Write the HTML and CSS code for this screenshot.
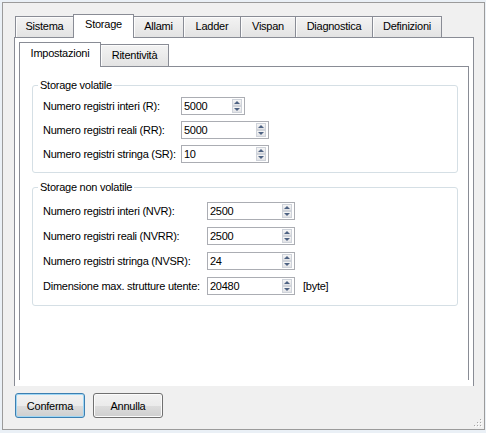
FILE: index.html
```html
<!DOCTYPE html>
<html lang="it">
<head>
<meta charset="utf-8">
<title>Storage</title>
<link rel="stylesheet" href="styles.css">
</head>
<body>
<div class="window">
  <div class="tabctl">
    <div class="tabs outer-tabs">
      <div class="tab w-sistema">Sistema</div>
      <div class="tab w-storage selected">Storage</div>
      <div class="tab w-allami">Allami</div>
      <div class="tab w-ladder">Ladder</div>
      <div class="tab w-vispan">Vispan</div>
      <div class="tab w-diag">Diagnostica</div>
      <div class="tab w-def last">Definizioni</div>
    </div>
    <div class="panel outer-panel">
      <div class="tabs inner-tabs">
        <div class="tab w-imp selected">Impostazioni</div>
        <div class="tab w-rit last">Ritentività</div>
      </div>
      <div class="panel inner-panel">
        <fieldset class="group g-vol">
          <legend>Storage volatile</legend>
          <div class="rows">
            <div class="row">
              <span class="lbl">Numero registri interi (R):</span>
              <div class="spin narrow"><span class="val">5000</span><span class="btns"><span class="sb up"></span><span class="sb dn"></span></span></div>
            </div>
            <div class="row">
              <span class="lbl">Numero registri reali (RR):</span>
              <div class="spin"><span class="val">5000</span><span class="btns"><span class="sb up"></span><span class="sb dn"></span></span></div>
            </div>
            <div class="row">
              <span class="lbl">Numero registri stringa (SR):</span>
              <div class="spin"><span class="val">10</span><span class="btns"><span class="sb up"></span><span class="sb dn"></span></span></div>
            </div>
          </div>
        </fieldset>
        <fieldset class="group g-nvol">
          <legend>Storage non volatile</legend>
          <div class="rows">
            <div class="row">
              <span class="lbl">Numero registri interi (NVR):</span>
              <div class="spin"><span class="val">2500</span><span class="btns"><span class="sb up"></span><span class="sb dn"></span></span></div>
            </div>
            <div class="row">
              <span class="lbl">Numero registri reali (NVRR):</span>
              <div class="spin"><span class="val">2500</span><span class="btns"><span class="sb up"></span><span class="sb dn"></span></span></div>
            </div>
            <div class="row">
              <span class="lbl">Numero registri stringa (NVSR):</span>
              <div class="spin"><span class="val">24</span><span class="btns"><span class="sb up"></span><span class="sb dn"></span></span></div>
            </div>
            <div class="row">
              <span class="lbl">Dimensione max. strutture utente:</span>
              <div class="spin"><span class="val">20480</span><span class="btns"><span class="sb up"></span><span class="sb dn"></span></span></div>
              <span class="unit">[byte]</span>
            </div>
          </div>
        </fieldset>
      </div>
    </div>
  </div>
  <div class="footer">
    <button class="btn default">Conferma</button>
    <button class="btn">Annulla</button>
    <svg class="grip" width="9" height="9" viewBox="0 0 9 9">
      <g fill="#fff">
        <rect x="7" y="1" width="1" height="1"/>
        <rect x="4" y="4" width="1" height="1"/><rect x="7" y="4" width="1" height="1"/>
        <rect x="1" y="7" width="1" height="1"/><rect x="4" y="7" width="1" height="1"/><rect x="7" y="7" width="1" height="1"/>
      </g>
      <g fill="#a6a6a6">
        <rect x="6" y="0" width="1" height="1"/>
        <rect x="3" y="3" width="1" height="1"/><rect x="6" y="3" width="1" height="1"/>
        <rect x="0" y="6" width="1" height="1"/><rect x="3" y="6" width="1" height="1"/><rect x="6" y="6" width="1" height="1"/>
      </g>
    </svg>
  </div>
</div>
</body>
</html>
```
FILE: styles.css
```css
html, body {
  margin: 0;
  padding: 0;
}
body {
  background: #eaf0f6;
  font-family: "Liberation Sans", Arial, sans-serif;
  font-size: 11px;
  color: #000;
  letter-spacing: -0.25px;
}

.window {
  box-sizing: border-box;
  margin: 2px 0 0 2px;
  width: 483px;
  height: 428px;
  border: 1px solid #9b9b9b;
  background: #f0f0f0;
  padding: 11px 0 0 11px;
  display: flex;
  flex-direction: column;
}

.tabctl {
  width: 460px;
}

.tabs {
  display: flex;
  align-items: flex-end;
}
.outer-tabs {
  height: 23px;
  padding-left: 1px;
}
.inner-tabs {
  height: 24px;
}

.tab {
  box-sizing: border-box;
  height: 21px;
  border-left: 1px solid #898c95;
  border-top: 1px solid #898c95;
  background: linear-gradient(#f3f3f3, #e3e3e3);
  box-shadow: inset 1px 1px 0 #fcfcfc;
  text-align: center;
  line-height: 18px;
  white-space: nowrap;
}
.inner-tabs .tab {
  height: 22px;
  line-height: 20px;
}
.tab.last {
  border-right: 1px solid #898c95;
}
.tab.selected {
  position: relative;
  z-index: 1;
  height: 24px;
  margin-bottom: -1px;
  margin-right: -1px;
  border-right: 1px solid #898c95;
  background: #fff;
  box-shadow: none;
  line-height: 19px;
}
.inner-tabs .tab.selected {
  height: 25px;
  line-height: 21px;
}

.w-sistema { width: 58px; }
.w-storage { width: 61px; }
.w-allami { width: 50px; }
.w-ladder { width: 57px; }
.w-vispan { width: 55px; }
.w-diag { width: 77px; }
.w-def { width: 70px; }
.w-imp { width: 82px; }
.w-rit { width: 69px; }

.panel {
  box-sizing: border-box;
  border: 1px solid #898c95;
  border-bottom: none;
  background: #fff;
}
.outer-panel {
  height: 349px;
  padding: 4px 4px 0 4px;
}
.inner-panel {
  width: 450px;
  height: 314px;
  padding: 12px 10px 0 12px;
}

.group {
  margin: 0;
  padding: 0;
  min-width: 0;
  width: 426px;
  box-sizing: border-box;
  border: 1px solid #d5dfe5;
  border-radius: 3px;
}
.group legend {
  margin-left: 5px;
  padding: 0 2px;
  line-height: 13px;
  height: 13px;
}
.rows {
  display: flex;
  flex-direction: column;
  padding-left: 10px;
}
.g-vol .rows {
  gap: 6px;
  padding-top: 5px;
  padding-bottom: 9px;
}
.g-nvol {
  margin-top: 8px;
}
.g-nvol .rows {
  gap: 7px;
  padding-top: 8px;
  padding-bottom: 10px;
}

.row {
  display: flex;
  align-items: center;
  height: 18px;
}
.lbl {
  white-space: nowrap;
}
.g-vol .lbl { width: 138px; }
.g-nvol .lbl { width: 164px; }

.spin {
  box-sizing: border-box;
  width: 88px;
  height: 18px;
  border: 1px solid #abadb3;
  background: #fff;
  display: flex;
  align-items: center;
  padding-left: 2px;
}
.spin.narrow { width: 64px; }
.val { flex: 1; }
.btns {
  display: flex;
  flex-direction: column;
  width: 10px;
  height: 14px;
  margin-right: 2px;
}
.sb {
  box-sizing: border-box;
  height: 7px;
  border: 1px solid #cfd3da;
  background: linear-gradient(#f6f6f6, #e2e3e6);
  display: flex;
  align-items: center;
  justify-content: center;
}
.sb::before {
  content: "";
  width: 0;
  height: 0;
  border-left: 3px solid transparent;
  border-right: 3px solid transparent;
}
.sb.up::before { border-bottom: 3px solid #4e6383; }
.sb.dn::before { border-top: 3px solid #4e6383; }

.unit {
  margin-left: 8px;
}

.footer {
  flex: 1;
  display: flex;
  align-items: flex-start;
  gap: 8px;
  padding-top: 7px;
  padding-left: 1px;
}
.btn {
  box-sizing: border-box;
  width: 70px;
  height: 25px;
  margin: 0;
  padding: 0;
  font: inherit;
  letter-spacing: inherit;
  color: #000;
  border: 1px solid #707070;
  border-radius: 3px;
  background: linear-gradient(#f2f2f2 0%, #ebebeb 50%, #dddddd 50%, #cfcfcf 100%);
  box-shadow: inset 0 0 0 1px #fbfbfb;
}
.btn.default {
  border-color: #3c7fb1;
  box-shadow: inset 0 0 0 1px #9fd6f4;
}
.grip {
  margin-left: auto;
  align-self: flex-end;
  margin-right: 1px;
  margin-bottom: 1px;
}
```
